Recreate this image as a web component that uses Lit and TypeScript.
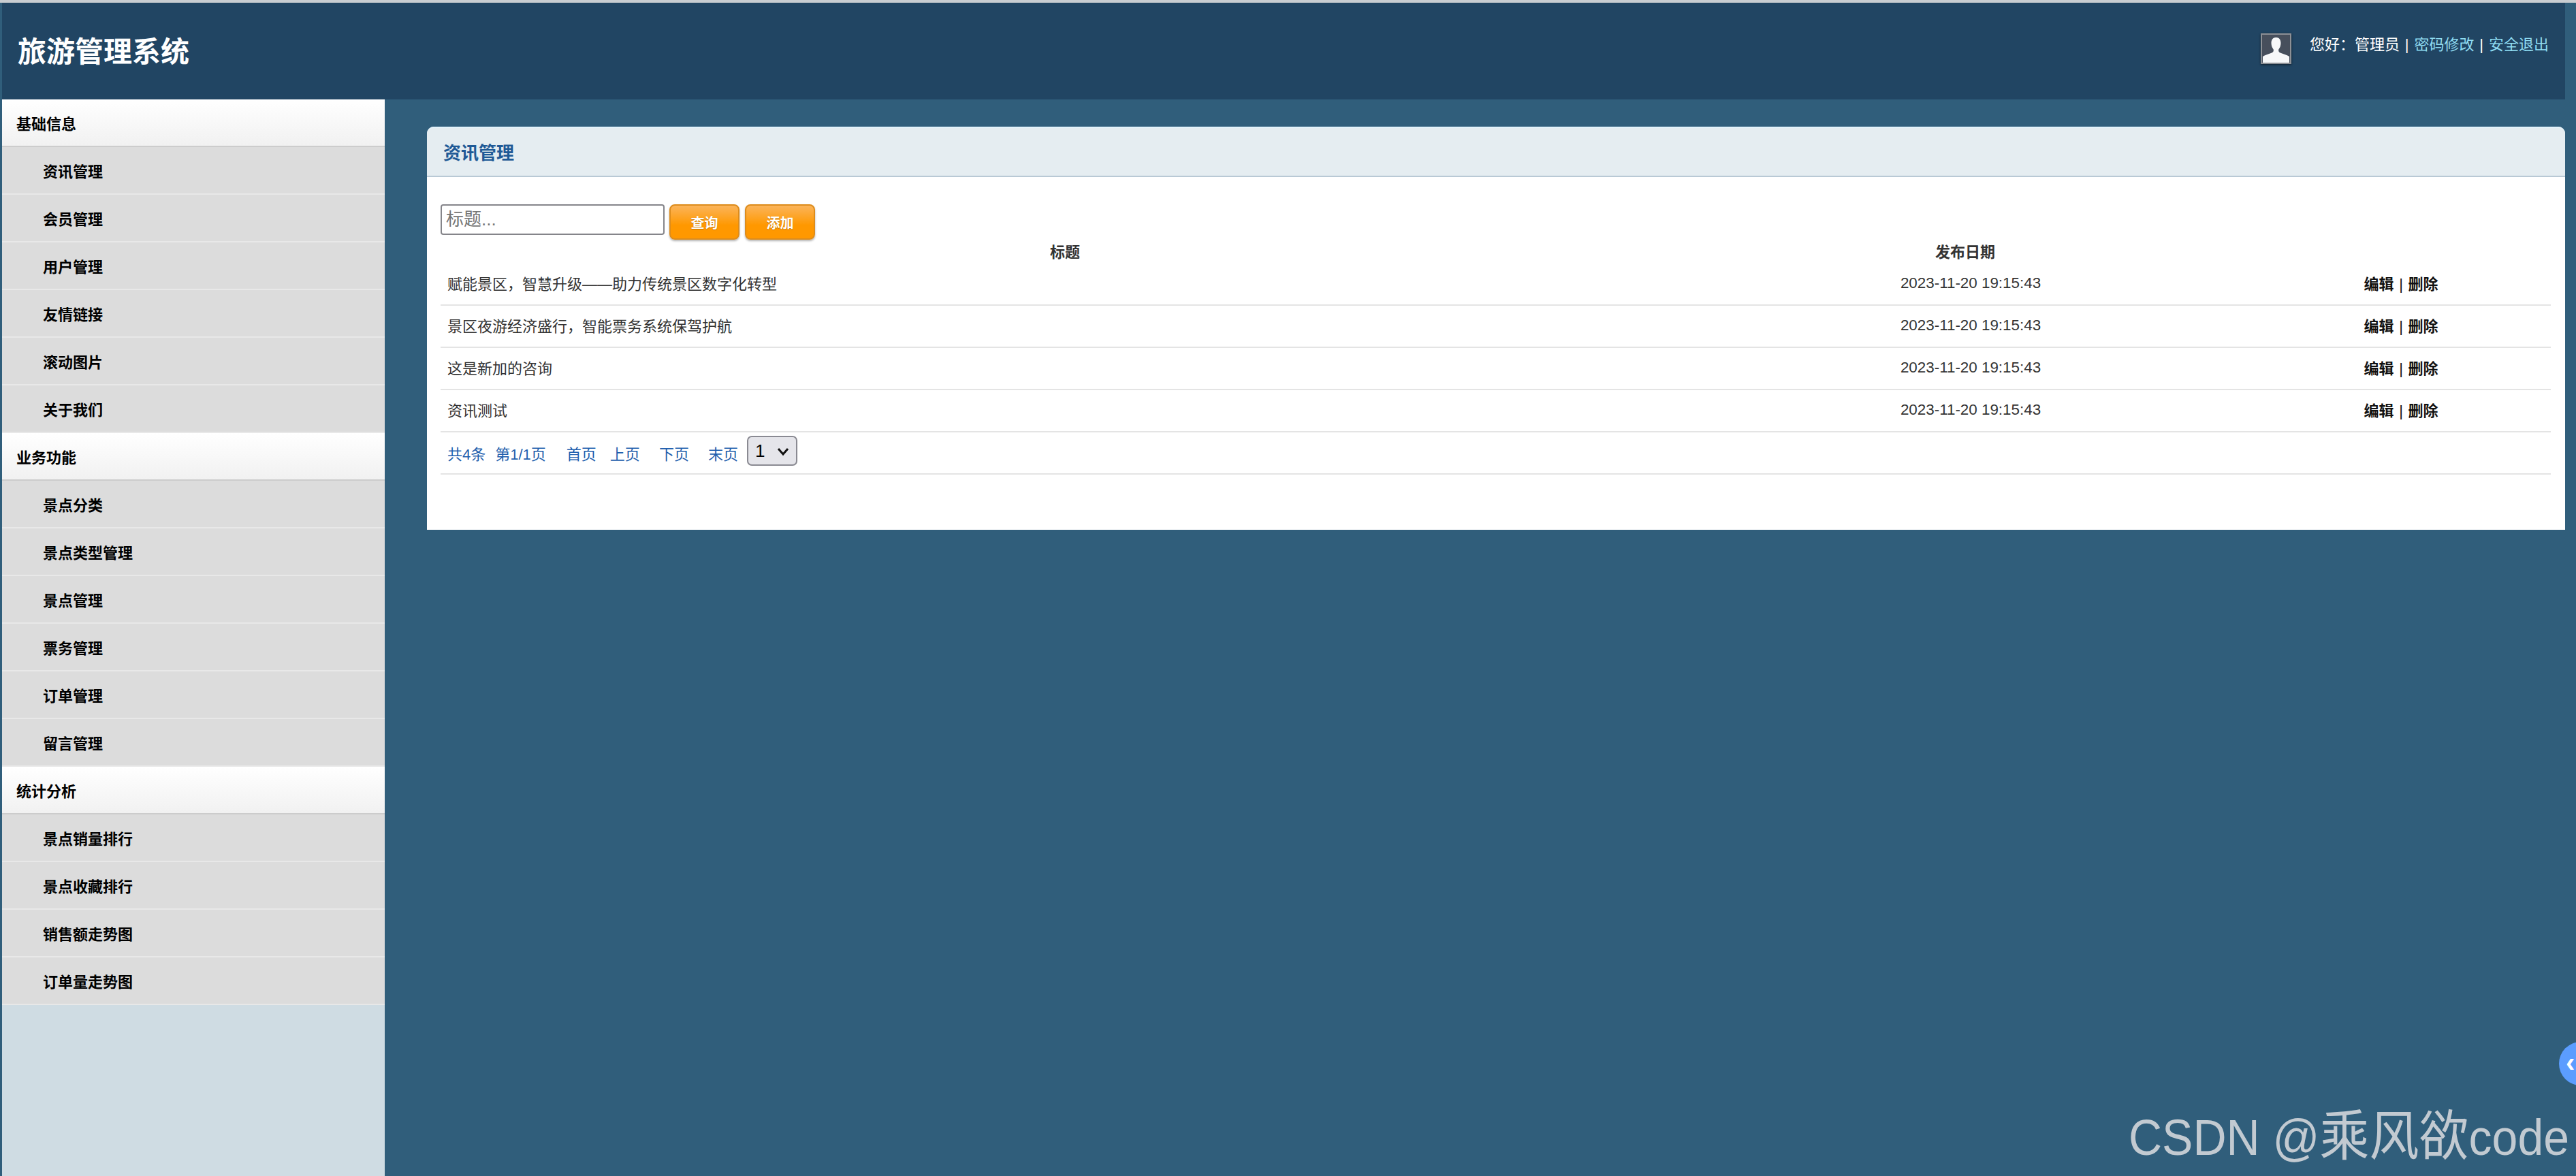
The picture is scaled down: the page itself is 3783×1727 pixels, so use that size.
import { LitElement, html, css } from "lit";
import { customElement } from "lit/decorators.js";

const MENU = [
  { title: "基础信息", items: ["资讯管理", "会员管理", "用户管理", "友情链接", "滚动图片", "关于我们"] },
  { title: "业务功能", items: ["景点分类", "景点类型管理", "景点管理", "票务管理", "订单管理", "留言管理"] },
  { title: "统计分析", items: ["景点销量排行", "景点收藏排行", "销售额走势图", "订单量走势图"] },
];

const ROWS = [
  "赋能景区，智慧升级——助力传统景区数字化转型",
  "景区夜游经济盛行，智能票务系统保驾护航",
  "这是新加的咨询",
  "资讯测试",
];

@customElement("app-root")
export class AppRoot extends LitElement {
  static styles = css`
    :host {
      display: block;
      position: relative;
      width: 3783px;
      height: 1727px;
      overflow: hidden;
      box-sizing: border-box;
      background: #305e7b;
      border-top: 4px solid #c9cdd1;
      font-family: "Liberation Sans", "Noto Sans CJK SC", sans-serif;
      font-size: 22px;
      color: #333;
    }
    .shell {
      display: grid;
      grid-template-columns: 562px 1fr;
      grid-template-rows: 142px 1fr;
      height: 100%;
      padding: 0 16px 0 3px;
      box-sizing: border-box;
    }
    .top {
      grid-column: 1 / 3;
      background: #214563;
      display: flex;
      align-items: flex-start;
      justify-content: space-between;
      padding: 0 24px 0 23px;
    }
    .logo {
      font-size: 42px;
      font-weight: 700;
      color: #fff;
      line-height: 146px;
    }
    .user {
      display: flex;
      align-items: flex-start;
      color: #fff;
      line-height: 32px;
      padding-top: 45px;
    }
    .avatar {
      width: 45px;
      height: 45px;
      margin-right: 27px;
      box-shadow: 0 1px 3px rgba(0, 0, 0, 0.6);
      display: block;
    }
    .hello {
      padding-top: 1px;
      white-space: pre;
      word-spacing: 1.8px;
    }
    .hello a {
      color: #8fdcf2;
      text-decoration: none;
    }
    .side {
      background: #cfdce3;
    }
    .group {
      height: 70px;
      box-sizing: border-box;
      padding: 5px 0 0 21px;
      line-height: 63px;
      font-weight: 700;
      color: #000;
      background: linear-gradient(#ffffff, #f1f1f1);
      border-bottom: 2px solid #cccccc;
    }
    .item {
      height: 70px;
      box-sizing: border-box;
      padding: 5px 0 0 60px;
      line-height: 63px;
      font-weight: 700;
      color: #000;
      background: #dcdcdc;
      border-bottom: 2px solid #e8e8e8;
    }
    .main {
      padding: 40px 0 0 62px;
    }
    .panel {
      background: #fff;
      border-radius: 10px 10px 0 0;
      padding-bottom: 81px;
    }
    .panel-title {
      height: 74px;
      box-sizing: border-box;
      background: #e5edf1;
      border-top: 2px solid #e3f3fb;
      border-bottom: 2px solid #b9c9d5;
      border-radius: 10px 10px 0 0;
      padding: 4px 0 0 24px;
      line-height: 66px;
      font-size: 26px;
      font-weight: 700;
      color: #1f5a96;
    }
    .body {
      padding: 40px 21px 0 20px;
    }
    .tools {
      display: flex;
      align-items: flex-start;
      height: 52px;
    }
    .tools input {
      width: 329px;
      height: 45px;
      box-sizing: border-box;
      border: 2px solid #85858a;
      border-radius: 4px;
      padding: 0 6px;
      font: inherit;
      font-size: 26px;
      margin: 0 7px 0 0;
      outline: none;
    }
    .tools input::placeholder {
      color: #757575;
    }
    .btn {
      width: 103px;
      height: 52px;
      box-sizing: border-box;
      margin-right: 8px;
      border: 2px solid #dd8c1c;
      border-radius: 8px;
      background: linear-gradient(#fbb45a, #ff9800 60%);
      box-shadow: 0 2px 3px rgba(0, 0, 0, 0.3);
      color: #fff;
      font: inherit;
      font-size: 20px;
      font-weight: 700;
      padding: 0;
      text-shadow: 0 1px 1px rgba(0, 0, 0, 0.25);
    }
    table {
      width: 3099px;
      table-layout: fixed;
      border-collapse: collapse;
    }
    .c1 { width: 1834px; }
    .c2 { width: 810px; }
    th {
      height: 31px;
      padding: 3px 0 0;
      font-weight: 700;
      color: #333;
      text-align: center;
      line-height: 28px;
    }
    td {
      height: 62px;
      box-sizing: border-box;
      border-bottom: 2px solid #e4e4e4;
      padding: 0 0 2px;
      text-align: center;
    }
    td.name {
      text-align: left;
      padding: 0 0 4px 10px;
    }
    td.date {
      padding-left: 16px;
      padding-bottom: 2px;
      font-size: 22.4px;
    }
    td.ops {
      padding: 0 0 4px 15px;
      font-weight: 700;
      color: #111;
      word-spacing: 1.5px;
    }
    td.ops span {
      font-weight: 400;
    }
    .pager {
      display: flex;
      align-items: center;
      padding-left: 10px;
      height: 60px;
      color: #1f5fae;
    }
    .pager span { margin-right: 28px; white-space: nowrap; }
    .pager .total { margin-right: 14px; }
    .pager .page { margin-right: 30px; }
    .pager .first { margin-right: 20px; }
    .pager .last { margin-right: 13px; }
    .pick {
      position: relative;
      display: block;
      width: 74px;
      height: 44px;
      margin-top: -6px;
    }
    .pick select {
      display: block;
      width: 100%;
      height: 100%;
      margin: 0;
      appearance: none;
      -webkit-appearance: none;
      font: inherit;
      font-size: 26px;
      color: #000;
      background: #e5e5ea;
      border: 2px solid #8a8a92;
      border-radius: 7px;
      padding: 0 0 0 10px;
      outline: none;
    }
    .chev {
      position: absolute;
      left: 44px;
      top: 17px;
      width: 18px;
      height: 13px;
      pointer-events: none;
    }
    .pager-cell {
      padding: 0;
      text-align: left;
    }
    .watermark {
      position: absolute;
      left: 3126px;
      top: 1620px;
      font-size: 68px;
      line-height: 90px;
      color: #c2cad1;
      white-space: nowrap;
      font-weight: 400;
      transform: scaleY(1.09);
    }
    .watermark span {
      font-size: 73px;
    }
    .float {
      position: absolute;
      left: 3758px;
      top: 1526px;
      width: 64px;
      height: 64px;
      border-radius: 50%;
      background: #5b9dff;
      color: #fff;
      font-size: 40px;
      font-weight: 700;
      line-height: 60px;
      text-indent: 10px;
    }
  `;

  render() {
    return html`
      <div class="shell">
        <header class="top">
          <div class="logo">旅游管理系统</div>
          <div class="user">
            <svg class="avatar" viewBox="0 0 45 45">
              <rect width="45" height="45" fill="#8d9095"></rect>
              <rect x="2" y="2" width="41" height="41" fill="#474f5c"></rect>
              <path
                d="M22.5 6c4.600 0 7 3.400 7 8.200 0 4-1.500 7.300-3.200 9.300-.6 2.500.3 4.300 3 5.300 4.500 1.700 9.500 3 12.700 5.200V43H3v-9c3.200-2.200 8.200-3.500 12.700-5.200 2.700-1 3.600-2.800 3-5.300-1.700-2-3.200-5.300-3.200-9.300 0-4.800 2.400-8.200 7-8.200z"
                fill="#f7f8f9"
              ></path>
            </svg>
            <div class="hello">您好：管理员 | <a>密码修改</a> | <a>安全退出</a></div>
          </div>
        </header>
        <nav class="side">
          ${MENU.map(
            (g) => html`
              <div class="group">${g.title}</div>
              ${g.items.map((i) => html`<div class="item">${i}</div>`)}
            `
          )}
        </nav>
        <main class="main">
          <section class="panel">
            <div class="panel-title">资讯管理</div>
            <div class="body">
              <div class="tools">
                <input placeholder="标题..." />
                <button class="btn">查询</button>
                <button class="btn">添加</button>
              </div>
              <table>
                <colgroup>
                  <col class="c1" />
                  <col class="c2" />
                  <col />
                </colgroup>
                <thead>
                  <tr>
                    <th>标题</th>
                    <th>发布日期</th>
                    <th></th>
                  </tr>
                </thead>
                <tbody>
                  ${ROWS.map(
                    (r) => html`
                      <tr>
                        <td class="name">${r}</td>
                        <td class="date">2023-11-20 19:15:43</td>
                        <td class="ops">编辑 <span>|</span> 删除</td>
                      </tr>
                    `
                  )}
                  <tr>
                    <td class="pager-cell" colspan="3">
                      <div class="pager">
                        <span class="total">共4条</span>
                        <span class="page">第1/1页</span>
                        <span class="first">首页</span>
                        <span>上页</span>
                        <span>下页</span>
                        <span class="last">末页</span>
                        <div class="pick">
                          <select><option>1</option></select>
                          <svg class="chev" viewBox="0 0 18 13">
                            <path d="M2 2l7 8 7-8" fill="none" stroke="#111" stroke-width="3"></path>
                          </svg>
                        </div>
                      </div>
                    </td>
                  </tr>
                </tbody>
              </table>
            </div>
          </section>
        </main>
      </div>
      <div class="float">‹</div>
      <div class="watermark">CSDN @<span>乘风欲</span>code</div>
    `;
  }
}
